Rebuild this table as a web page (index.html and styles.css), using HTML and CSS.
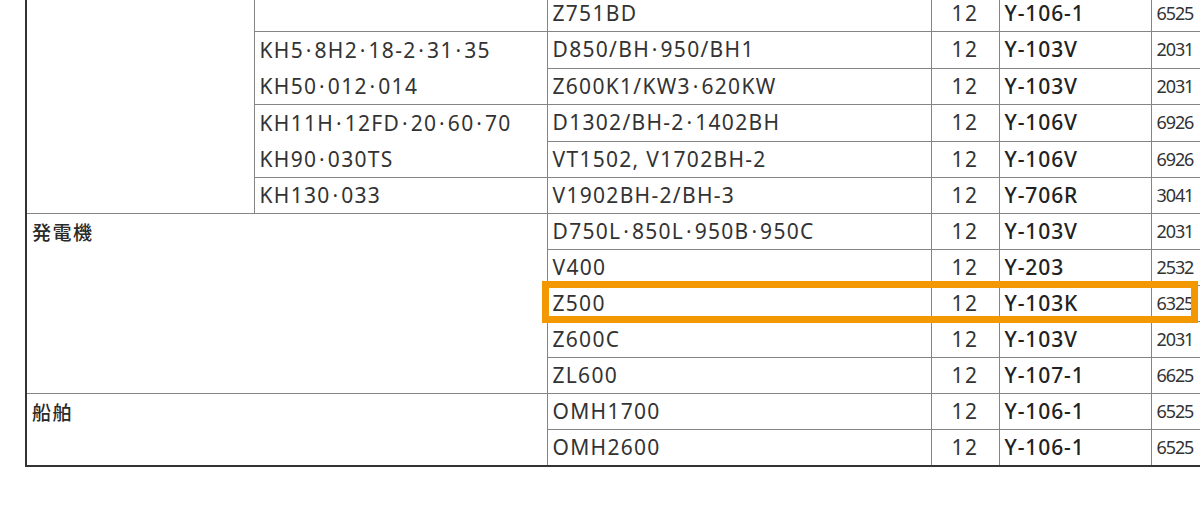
FILE: index.html
```html
<!DOCTYPE html>
<html lang="ja">
<head>
<meta charset="utf-8">
<title>適合表</title>
<link rel="stylesheet" href="styles.css">
</head>
<body>
<div class="wrap">
<table class="spec">
  <colgroup>
    <col class="c1"><col class="c2"><col class="c3"><col class="c4"><col class="c5"><col class="c6">
  </colgroup>
  <tbody>
    <tr>
      <td rowspan="6"></td>
      <td></td>
      <td>Z751BD</td><td class="num">12</td><td class="code">Y-106-1</td><td class="part">6525</td>
    </tr>
    <tr>
      <td rowspan="2" class="multi">KH5<span class="dot">·</span>8H2<span class="dot">·</span>18-2<span class="dot">·</span>31<span class="dot">·</span>35<br>KH50<span class="dot">·</span>012<span class="dot">·</span>014</td>
      <td>D850/BH<span class="dot">·</span>950/BH1</td><td class="num">12</td><td class="code">Y-103V</td><td class="part">2031</td>
    </tr>
    <tr>
      <td>Z600K1/KW3<span class="dot">·</span>620KW</td><td class="num">12</td><td class="code">Y-103V</td><td class="part">2031</td>
    </tr>
    <tr>
      <td rowspan="2" class="multi">KH11H<span class="dot">·</span>12FD<span class="dot">·</span>20<span class="dot">·</span>60<span class="dot">·</span>70<br>KH90<span class="dot">·</span>030TS</td>
      <td>D1302/BH-2<span class="dot">·</span>1402BH</td><td class="num">12</td><td class="code">Y-106V</td><td class="part">6926</td>
    </tr>
    <tr>
      <td>VT1502, V1702BH-2</td><td class="num">12</td><td class="code">Y-106V</td><td class="part">6926</td>
    </tr>
    <tr>
      <td>KH130<span class="dot">·</span>033</td>
      <td>V1902BH-2/BH-3</td><td class="num">12</td><td class="code">Y-706R</td><td class="part">3041</td>
    </tr>
    <tr>
      <td colspan="2" rowspan="5" class="cat">発電機</td>
      <td>D750L<span class="dot">·</span>850L<span class="dot">·</span>950B<span class="dot">·</span>950C</td><td class="num">12</td><td class="code">Y-103V</td><td class="part">2031</td>
    </tr>
    <tr>
      <td>V400</td><td class="num">12</td><td class="code">Y-203</td><td class="part">2532</td>
    </tr>
    <tr>
      <td class="hl-anchor">Z500<span class="highlight"></span></td><td class="num">12</td><td class="code">Y-103K</td><td class="part">6325</td>
    </tr>
    <tr>
      <td>Z600C</td><td class="num">12</td><td class="code">Y-103V</td><td class="part">2031</td>
    </tr>
    <tr>
      <td>ZL600</td><td class="num">12</td><td class="code">Y-107-1</td><td class="part">6625</td>
    </tr>
    <tr>
      <td colspan="2" rowspan="2" class="cat">船舶</td>
      <td>OMH1700</td><td class="num">12</td><td class="code">Y-106-1</td><td class="part">6525</td>
    </tr>
    <tr>
      <td>OMH2600</td><td class="num">12</td><td class="code">Y-106-1</td><td class="part">6525</td>
    </tr>
  </tbody>
</table>
</div>
</body>
</html>
```

FILE: styles.css
```css
html, body {
  margin: 0;
  padding: 0;
  background: #ffffff;
  overflow: hidden;
}

body {
  width: 1200px;
  height: 517px;
  font-family: "Noto Sans", "Noto Sans CJK JP", sans-serif;
  color: #333333;
}

.wrap {
  padding-left: 25px;
  margin-top: -5px;
}

.spec {
  border-collapse: collapse;
  table-layout: fixed;
  width: 1245px;
  border-left: 2px solid #333333;
  border-bottom: 2px solid #333333;
}

.c1 { width: 228px; }
.c2 { width: 293px; }
.c3 { width: 384px; }
.c4 { width: 68px; }
.c5 { width: 152px; }
.c6 { width: 120px; }

.spec td {
  border: 1px solid #858585;
  height: 36px;
  padding: 0 5px;
  font-size: 21px;
  line-height: 35px;
  letter-spacing: 1.3px;
  white-space: nowrap;
  vertical-align: middle;
  box-sizing: border-box;
  overflow: visible;
}

.dot {
  margin: 0 1.8px;
}

.spec td.multi {
  vertical-align: top;
  line-height: 36px;
}

.spec td.cat {
  vertical-align: top;
  font-family: "Noto Sans CJK JP", sans-serif;
  font-size: 19px;
  font-weight: 500;
  letter-spacing: 1.5px;
  color: #2a2a2a;
}

.spec td.num {
  text-align: center;
  letter-spacing: 1.5px;
  padding: 0;
}

.spec td.code {
  font-weight: 500;
  color: #222222;
  letter-spacing: 0.9px;
}

.spec td.part {
  font-size: 18px;
  letter-spacing: -1.1px;
  padding-left: 5px;
}

.hl-anchor {
  position: relative;
}

.highlight {
  position: absolute;
  left: -6px;
  top: -5px;
  width: 656px;
  height: 42px;
  border: 7px solid #f39800;
  box-sizing: border-box;
  pointer-events: none;
}
```
